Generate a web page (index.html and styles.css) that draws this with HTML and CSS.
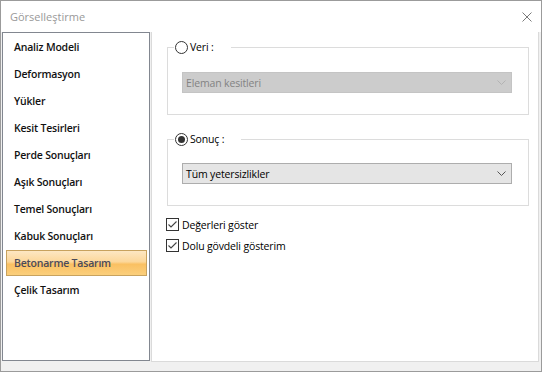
FILE: index.html
```html
<!DOCTYPE html>
<html lang="tr">
<head>
<meta charset="utf-8">
<title>Görselleştirme</title>
<link rel="stylesheet" href="styles.css">
</head>
<body>
<div class="window">
  <div class="titlebar">
    <span class="title">Görselleştirme</span>
    <svg class="close" width="10" height="10" viewBox="0 0 10 10"><path d="M0.5 0.5L9.5 9.5M9.5 0.5L0.5 9.5" stroke="#7a7a7a" stroke-width="1" fill="none"/></svg>
  </div>
  <div class="body">
    <ul class="nav">
      <li class="nav-item">Analiz Modeli</li>
      <li class="nav-item">Deformasyon</li>
      <li class="nav-item">Yükler</li>
      <li class="nav-item">Kesit Tesirleri</li>
      <li class="nav-item">Perde Sonuçları</li>
      <li class="nav-item">Aşık Sonuçları</li>
      <li class="nav-item">Temel Sonuçları</li>
      <li class="nav-item">Kabuk Sonuçları</li>
      <li class="nav-item active">Betonarme Tasarım</li>
      <li class="nav-item">Çelik Tasarım</li>
    </ul>
    <div class="panel">
      <fieldset class="group">
        <legend class="group-legend"><span class="radio"></span>Veri :</legend>
        <div class="group-body">
          <div class="combo disabled">
            <span>Eleman kesitleri</span>
            <svg class="chevron" width="9" height="5" viewBox="0 0 9 5"><path d="M0.5 0.5L4.5 4.5L8.5 0.5" stroke="#b3b3b3" stroke-width="1" fill="none"/></svg>
          </div>
        </div>
      </fieldset>
      <fieldset class="group second">
        <legend class="group-legend"><span class="radio checked"></span>Sonuç :</legend>
        <div class="group-body">
          <div class="combo">
            <span>Tüm yetersizlikler</span>
            <svg class="chevron" width="9" height="5" viewBox="0 0 9 5"><path d="M0.5 0.5L4.5 4.5L8.5 0.5" stroke="#555" stroke-width="1" fill="none"/></svg>
          </div>
        </div>
      </fieldset>
      <div class="checks">
        <label class="check"><span class="box"><svg width="11" height="11" viewBox="0 0 11 11"><path d="M1.5 5.5L4 8L9.5 2.5" stroke="#444" stroke-width="1.1" fill="none"/></svg></span>Değerleri göster</label>
        <label class="check"><span class="box"><svg width="11" height="11" viewBox="0 0 11 11"><path d="M1.5 5.5L4 8L9.5 2.5" stroke="#444" stroke-width="1.1" fill="none"/></svg></span>Dolu gövdeli gösterim</label>
      </div>
    </div>
  </div>
</div>
</body>
</html>
```
FILE: styles.css
```css
html, body {
  margin: 0;
  padding: 0;
}
body {
  font-family: "Open Sans", "Noto Sans", sans-serif;
  font-size: 10.5px;
  letter-spacing: -0.15px;
  color: #000;
}
.window {
  width: 542px;
  height: 372px;
  box-sizing: border-box;
  border: 1px solid #9b9b9b;
  background: #f0f0f0;
  display: flex;
  flex-direction: column;
}
.titlebar {
  height: 31px;
  flex: none;
  background: #fff;
  display: flex;
  align-items: center;
  justify-content: space-between;
  padding: 0 9px 0 9px;
}
.title {
  color: #999;
  font-size: 11px;
  letter-spacing: 0;
}
.close {
  display: block;
}
.body {
  flex: 1;
  display: flex;
  gap: 1px;
  padding: 0 2px 9px 1px;
}
.nav {
  list-style: none;
  margin: 0 0 1px 0;
  padding: 1px 2px 0 3px;
  width: 148px;
  box-sizing: border-box;
  background: #fff;
  border: 1px solid #828790;
}
.nav-item {
  height: 26px;
  box-sizing: border-box;
  margin-bottom: 1px;
  padding-left: 7px;
  border: 1px solid transparent;
  display: flex;
  align-items: center;
  font-weight: 600;
  font-size: 10.5px;
  letter-spacing: -0.2px;
  color: #111;
}
.nav-item.active {
  border-color: #c8a25e;
  color: #4a4a5a;
  background: linear-gradient(#fde7c3 0%, #fcd79a 45%, #fac062 55%, #fbcf7c 100%);
}
.panel {
  flex: 1;
  background: #fff;
  border: 1px solid #dadada;
  border-top: none;
  padding: 8px 9px 0 15px;
}
.group {
  margin: 0;
  padding: 0;
  border: 1px solid #dcdcdc;
  min-width: 0;
}
.group.second {
  margin-top: 17px;
}
.group-legend {
  margin-left: 6px;
  padding: 0 17px 0 1px;
  height: 15px;
  line-height: 15px;
  display: flex;
  align-items: center;
}
.radio {
  width: 13px;
  height: 13px;
  box-sizing: border-box;
  border: 1px solid #333;
  border-radius: 50%;
  background: #fff;
  margin-right: 2px;
  display: flex;
  align-items: center;
  justify-content: center;
}
.radio.checked::after {
  content: "";
  width: 7px;
  height: 7px;
  border-radius: 50%;
  background: #333;
}
.group-body {
  padding: 17px 16px 21px 14px;
}
.second .group-body {
  padding-top: 16px;
}
.combo {
  height: 21px;
  box-sizing: border-box;
  border: 1px solid #adadad;
  background: #e5e5e5;
  display: flex;
  align-items: center;
  justify-content: space-between;
  padding: 0 5px 0 3px;
}
.combo.disabled {
  background: #cccccc;
  border-color: #c4c4c4;
  color: #838383;
}
.chevron {
  display: block;
}
.checks {
  margin-top: 8px;
  margin-left: -1px;
  display: flex;
  flex-direction: column;
}
.check {
  height: 21px;
  display: flex;
  align-items: center;
}
.box {
  width: 13px;
  height: 13px;
  box-sizing: border-box;
  border: 1px solid #333;
  margin-right: 3px;
  display: flex;
  align-items: center;
  justify-content: center;
}
.box svg {
  display: block;
}
```
